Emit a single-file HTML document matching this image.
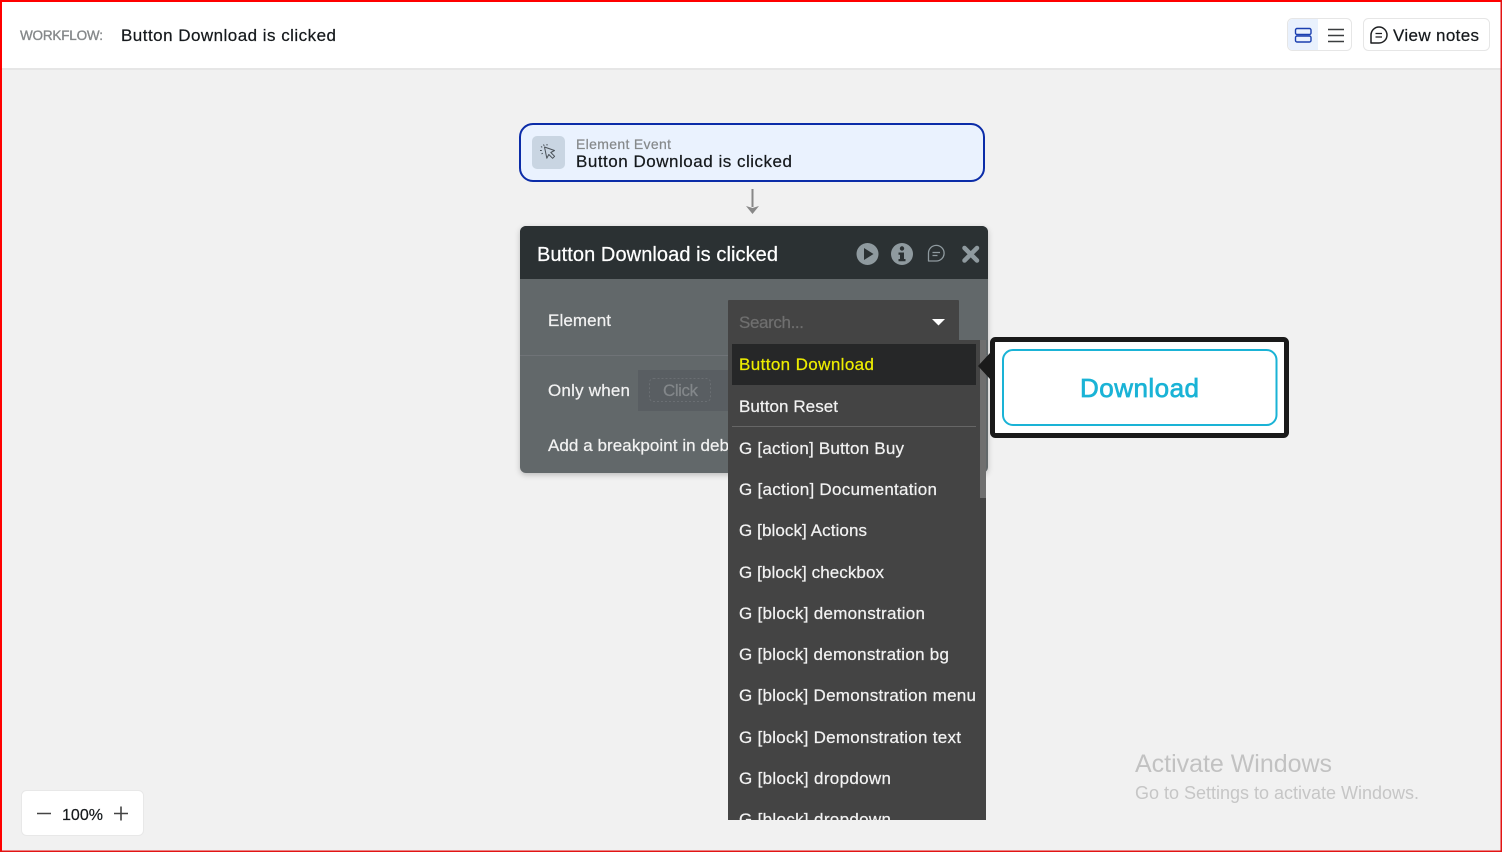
<!DOCTYPE html>
<html lang="en">
<head>
<meta charset="utf-8">
<title>Workflow</title>
<style>
html,body{margin:0;padding:0;width:1502px;height:852px;overflow:hidden;background:#f1f1f1}
svg{display:block}
text{font-family:"Liberation Sans",Arial,sans-serif;white-space:pre;fill:currentColor;stroke:currentColor;stroke-width:.22px}
.li{font-size:17px;color:#f2f2f2}
</style>
</head>
<body>
<svg width="1502" height="852" viewBox="0 0 1502 852" xmlns="http://www.w3.org/2000/svg">
<defs>
<filter id="sh" x="-5%" y="-5%" width="110%" height="112%"><feDropShadow dx="0" dy="2" stdDeviation="3" flood-color="#000" flood-opacity=".22"/></filter>
</defs>
<rect width="1502" height="852" fill="#f1f1f1"/>
<!-- top bar -->
<rect x="0" y="0" width="1502" height="68" fill="#fff"/>
<rect x="0" y="68" width="1502" height="2" fill="#e6e6e6"/>
<text x="20" y="40" font-size="13.5" color="#85888a" textLength="83" style="stroke-width:.35px">WORKFLOW:</text>
<text x="121" y="41" font-size="17" color="#15191c" textLength="215">Button Download is clicked</text>
<!-- toggle -->
<rect x="1287.5" y="18.5" width="64" height="32" rx="5" fill="#fff" stroke="#e6e6e6"/>
<path d="M1293 19h25v31h-25a5 5 0 0 1-5-5v-21a5 5 0 0 1 5-5z" fill="#e9f1fd"/>
<rect x="1295.5" y="28.5" width="15.5" height="6" rx="1.5" fill="none" stroke="#1a3fb0" stroke-width="1.4"/>
<rect x="1295.5" y="36" width="15.5" height="6" rx="1.5" fill="none" stroke="#1a3fb0" stroke-width="1.4"/>
<path d="M1328 29.5h16M1328 35.5h16M1328 41.5h16" stroke="#3a3d3f" stroke-width="1.6" fill="none"/>
<!-- view notes -->
<rect x="1363.5" y="18.5" width="126" height="32" rx="5" fill="#fff" stroke="#e6e6e6"/>
<path d="M1371 43v-8a8 8 0 1 1 8 8z" fill="none" stroke="#1d1f21" stroke-width="1.5" stroke-linejoin="round"/>
<path d="M1375.5 33.5h6.500M1375.5 37h6.500" stroke="#1d1f21" stroke-width="1.3"/>
<text x="1393" y="41" font-size="17" color="#15191c" textLength="86">View notes</text>
<!-- event card -->
<rect x="520" y="124" width="464" height="57" rx="13" fill="#eaf2fe" stroke="#0b2ca8" stroke-width="2"/>
<rect x="532" y="136" width="33" height="33" rx="5" fill="#c9d5e2"/>
<path d="M544.500 147l10 3.500-3.700 2 3.800 3.800-2 2-3.800-3.800-2 3.700z" fill="none" stroke="#4a5158" stroke-width="1" stroke-linejoin="round"/>
<path d="M540 150.500h1.800M543.500 144.500l.7 1.400M547 144v1.500M541 146.500l1.200.8M541.500 154l1.300-.8" stroke="#4a5158" stroke-width="1"/>
<text x="576" y="149" font-size="14" color="#85888a" textLength="95">Element Event</text>
<text x="576" y="167" font-size="17" color="#15191c" textLength="216">Button Download is clicked</text>
<!-- arrow -->
<path d="M752.500 189v18" stroke="#888" stroke-width="2"/>
<path d="M746 206l6.500 2 6.500-2-6.500 8z" fill="#888"/>
<!-- panel -->
<g filter="url(#sh)"><rect x="520" y="226" width="468" height="247" rx="6" fill="#62676b"/></g>
<path d="M526 226h456a6 6 0 0 1 6 6v47h-468v-47a6 6 0 0 1 6-6z" fill="#2b3133"/>
<text x="537" y="261" font-size="20" color="#fff" textLength="241">Button Download is clicked</text>
<circle cx="867.500" cy="254" r="11" fill="#8f9a9f"/>
<path d="M864 248l9.500 6-9.500 6z" fill="#2b3133"/>
<circle cx="902" cy="254" r="11" fill="#8f9a9f"/>
<circle cx="902" cy="248.500" r="2.200" fill="#2b3133"/>
<path d="M898.500 252.500h5.500v6.500h1.500v2.200h-7v-2.200h1.500v-4.300h-1.500z" fill="#2b3133"/>
<path d="M928.500 261v-7.500a7.800 7.800 0 1 1 7.800 7.500z" fill="none" stroke="#8f9a9f" stroke-width="1.300" stroke-linejoin="round"/>
<path d="M932.500 252.500h7.500M932.500 255.500h5" stroke="#8f9a9f" stroke-width="1.200"/>
<path d="M964.500 248l12.500 12.500M977 248l-12.500 12.500" stroke="#8f9a9f" stroke-width="4.500" stroke-linecap="round"/>
<text x="548" y="326" font-size="17" color="#f2f2f2" textLength="63">Element</text>
<rect x="520" y="355" width="468" height="1" fill="#6f7377"/>
<text x="548" y="396" font-size="17" color="#f2f2f2" textLength="82">Only when</text>
<rect x="638" y="370" width="95" height="41" fill="#595e62"/>
<rect x="649.500" y="378.500" width="61" height="23" rx="4" fill="none" stroke="#6a6f73" stroke-dasharray="2 2"/>
<text x="663" y="396" font-size="17" color="#83878a" textLength="35">Click</text>
<text x="548" y="451" font-size="17" color="#f2f2f2" textLength="181">Add a breakpoint in deb</text>
<!-- dropdown -->
<rect x="728" y="300" width="231" height="42" rx="1" fill="#444"/>
<rect x="728" y="340" width="258" height="480" fill="#444"/>
<rect x="980" y="340" width="6" height="158" fill="#6f6f6f"/>
<text x="739" y="328" font-size="17" color="#6f6f6f" textLength="65">Search...</text>
<path d="M932 319h13l-6.500 6.500z" fill="#fff"/>
<rect x="732" y="344" width="244" height="41" fill="#262728"/>
<rect x="732" y="426" width="244" height="1" fill="#666"/>
<text class="li" x="739" y="370" style="color:#eded00" textLength="135">Button Download</text>
<text class="li" x="739" y="412" textLength="99">Button Reset</text>
<text class="li" x="739" y="454" textLength="165">G [action] Button Buy</text>
<text class="li" x="739" y="495" textLength="198">G [action] Documentation</text>
<text class="li" x="739" y="536" textLength="128">G [block] Actions</text>
<text class="li" x="739" y="578" textLength="145">G [block] checkbox</text>
<text class="li" x="739" y="619" textLength="186">G [block] demonstration</text>
<text class="li" x="739" y="660" textLength="210">G [block] demonstration bg</text>
<text class="li" x="739" y="701" textLength="237">G [block] Demonstration menu</text>
<text class="li" x="739" y="743" textLength="222">G [block] Demonstration text</text>
<text class="li" x="739" y="784" textLength="152">G [block] dropdown</text>
<text class="li" x="739" y="825" textLength="152">G [block] dropdown</text>
<rect x="700" y="820" width="320" height="30" fill="#f1f1f1"/>
<!-- callout -->
<path d="M978 366l12-13v26z" fill="#1a1a1a"/>
<rect x="992.500" y="339.500" width="294" height="96" rx="3" fill="#fff" stroke="#1a1a1a" stroke-width="5"/>
<rect x="1003" y="350" width="273.500" height="75" rx="10" fill="#fff" stroke="#1ab3d6" stroke-width="2"/>
<text x="1080" y="397" font-size="26" color="#1ab3d6" textLength="119" style="stroke-width:.7px">Download</text>
<!-- zoom -->
<rect x="21.500" y="790.500" width="122" height="45" rx="5" fill="#fff" stroke="#e8e8e8"/>
<path d="M37 813.500h14M114 813.500h14M121 806.500v14" stroke="#444" stroke-width="1.600"/>
<text x="62" y="820" font-size="16" color="#15191c" textLength="41">100%</text>
<!-- watermark -->
<text x="1135" y="772" font-size="25" color="#c2c2c2" textLength="197" style="stroke-width:0">Activate Windows</text>
<text x="1135" y="799" font-size="18" color="#c6c6c6" textLength="284" style="stroke-width:0">Go to Settings to activate Windows.</text>
<!-- red frame -->
<rect x="0" y="0" width="1502" height="2" fill="#f00"/>
<rect x="0" y="0" width="2" height="852" fill="#f00"/>
<rect x="1500.500" y="0" width="1.500" height="852" fill="#e31414"/>
<rect x="0" y="850.500" width="1502" height="1.500" fill="#e31414"/>
</svg>
</body>
</html>
